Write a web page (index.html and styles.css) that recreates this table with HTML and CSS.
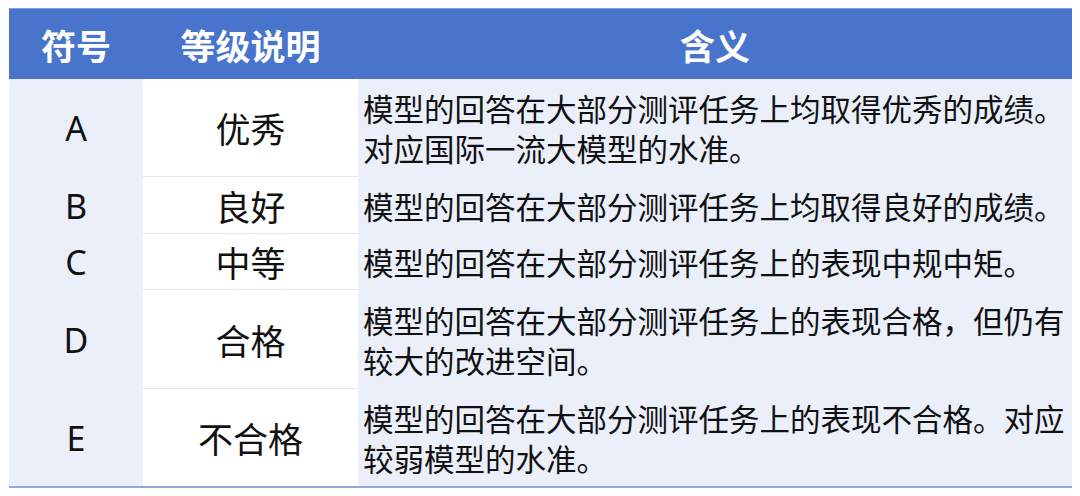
FILE: index.html
```html
<!DOCTYPE html>
<html lang="zh">
<head>
<meta charset="utf-8">
<link rel="stylesheet" href="styles.css">
</head>
<body>
<div class="grade-table">
  <div class="th">符号</div>
  <div class="th">等级说明</div>
  <div class="th">含义</div>

  <div class="sym r1">A</div>
  <div class="lvl r1">优秀</div>
  <div class="desc r1">模型的回答在大部分测评任务上均取得优秀的成绩。<br>对应国际一流大模型的水准。</div>

  <div class="sym r2">B</div>
  <div class="lvl r2">良好</div>
  <div class="desc r2">模型的回答在大部分测评任务上均取得良好的成绩。</div>

  <div class="sym r3">C</div>
  <div class="lvl r3">中等</div>
  <div class="desc r3">模型的回答在大部分测评任务上的表现中规中矩。</div>

  <div class="sym r4">D</div>
  <div class="lvl r4">合格</div>
  <div class="desc r4">模型的回答在大部分测评任务上的表现合格，但仍有<br>较大的改进空间。</div>

  <div class="sym r5">E</div>
  <div class="lvl r5 last">不合格</div>
  <div class="desc r5">模型的回答在大部分测评任务上的表现不合格。对应<br>较弱模型的水准。</div>
</div>
</body>
</html>
```

FILE: styles.css
```css
html, body {
  margin: 0;
  padding: 0;
  background: #ffffff;
}

body {
  padding: 8px 8px 0 9px;
  font-family: "Noto Sans", "Noto Sans CJK SC", sans-serif;
  color: #111111;
}

.grade-table {
  width: 1063px;
  display: grid;
  grid-template-columns: 134px 215px 714px;
  grid-template-rows: 71px 98px 57px 56px 99px 97px;
  border-bottom: 2px solid #8eaadb;
}

.th {
  background: #4874cb;
  border-top: 1px solid #7f9fdc;
  color: #ffffff;
  font-family: "Noto Sans CJK SC", sans-serif;
  font-weight: 700;
  font-size: 35px;
  display: flex;
  align-items: center;
  justify-content: center;
  line-height: 1;
}

.sym {
  background: #eaeff9;
  display: flex;
  align-items: center;
  justify-content: center;
  font-size: 34px;
  line-height: 1;
}

.lvl {
  background: #ffffff;
  border-bottom: 1px solid #e6e6e6;
  display: flex;
  align-items: center;
  justify-content: center;
  font-family: "Noto Sans CJK SC", sans-serif;
  font-size: 35px;
  line-height: 1;
}

.lvl.last {
  border-bottom: none;
}

.desc {
  background: #eaeff9;
  display: flex;
  align-items: center;
  padding-left: 5px;
  font-family: "Noto Sans CJK SC", sans-serif;
  font-size: 30.5px;
  line-height: 40px;
}
```
